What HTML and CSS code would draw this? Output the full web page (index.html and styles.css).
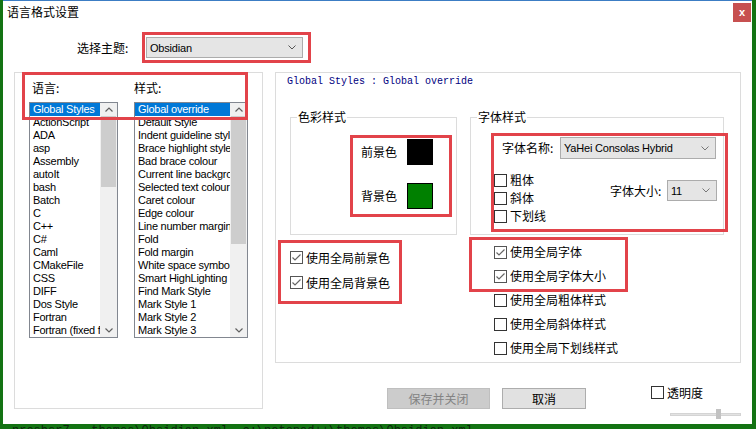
FILE: index.html
```html
<!DOCTYPE html>
<html lang="zh-CN">
<head>
<meta charset="utf-8">
<title>语言格式设置</title>
<link rel="stylesheet" href="styles.css">
</head>
<body>
<div class="dialog">
  <div class="titlebar">
    <span class="title">语言格式设置</span>
    <span class="close">x</span>
  </div>

  <div class="theme-row">
    <span class="theme-label">选择主题:</span>
    <div class="combo theme-combo">
      <span>Obsidian</span>
      <svg class="chev" width="8" height="5" viewBox="0 0 8 5"><polyline points="0.5,0.5 4,4 7.5,0.5" fill="none" stroke="#555" stroke-width="1"/></svg>
    </div>
  </div>

  <div class="main">
    <div class="group left-group">
      <div class="lists">
        <div class="col lang-col">
          <div class="col-label">语言:</div>
          <div class="listbox lang-list">
            <ul class="items">
              <li class="sel">Global Styles</li>
              <li>ActionScript</li>
              <li>ADA</li>
              <li>asp</li>
              <li>Assembly</li>
              <li>autoIt</li>
              <li>bash</li>
              <li>Batch</li>
              <li>C</li>
              <li>C++</li>
              <li>C#</li>
              <li>Caml</li>
              <li>CMakeFile</li>
              <li>CSS</li>
              <li>DIFF</li>
              <li>Dos Style</li>
              <li>Fortran</li>
              <li>Fortran (fixed form)</li>
            </ul>
            <div class="vscroll">
              <span class="arrow"><svg width="8" height="5" viewBox="0 0 8 5"><polyline points="0.5,4.5 4,1 7.5,4.5" fill="none" stroke="#606060" stroke-width="1.2"/></svg></span>
              <span class="track"><span class="thumb" style="height:71px"></span></span>
              <span class="arrow"><svg width="8" height="5" viewBox="0 0 8 5"><polyline points="0.5,0.5 4,4 7.5,0.5" fill="none" stroke="#606060" stroke-width="1.2"/></svg></span>
            </div>
          </div>
        </div>
        <div class="col style-col">
          <div class="col-label">样式:</div>
          <div class="listbox style-list">
            <ul class="items">
              <li class="sel">Global override</li>
              <li>Default Style</li>
              <li>Indent guideline style</li>
              <li>Brace highlight style</li>
              <li>Bad brace colour</li>
              <li>Current line background colour</li>
              <li>Selected text colour</li>
              <li>Caret colour</li>
              <li>Edge colour</li>
              <li>Line number margin</li>
              <li>Fold</li>
              <li>Fold margin</li>
              <li>White space symbol</li>
              <li>Smart HighLighting</li>
              <li>Find Mark Style</li>
              <li>Mark Style 1</li>
              <li>Mark Style 2</li>
              <li>Mark Style 3</li>
            </ul>
            <div class="vscroll">
              <span class="arrow"><svg width="8" height="5" viewBox="0 0 8 5"><polyline points="0.5,4.5 4,1 7.5,4.5" fill="none" stroke="#606060" stroke-width="1.2"/></svg></span>
              <span class="track"><span class="thumb" style="height:128px"></span></span>
              <span class="arrow"><svg width="8" height="5" viewBox="0 0 8 5"><polyline points="0.5,0.5 4,4 7.5,0.5" fill="none" stroke="#606060" stroke-width="1.2"/></svg></span>
            </div>
          </div>
        </div>
      </div>
    </div>

    <div class="right-col">
      <div class="group right-group">
        <div class="header">Global Styles : Global override</div>
        <div class="boxes">
          <fieldset class="color-box">
            <legend>色彩样式</legend>
            <div class="color-row first">
              <span class="color-label">前景色</span>
              <span class="swatch black"></span>
            </div>
            <div class="color-row">
              <span class="color-label">背景色</span>
              <span class="swatch green"></span>
            </div>
          </fieldset>
          <fieldset class="font-box">
            <legend>字体样式</legend>
            <div class="font-name-row">
              <span class="fn-label">字体名称:</span>
              <div class="combo font-combo">
                <span>YaHei Consolas Hybrid</span>
                <svg class="chev" width="8" height="5" viewBox="0 0 8 5"><polyline points="0.5,0.5 4,4 7.5,0.5" fill="none" stroke="#777" stroke-width="1"/></svg>
              </div>
            </div>
            <div class="font-opts">
              <div class="style-checks">
                <label class="check"><span class="box"></span>粗体</label>
                <label class="check"><span class="box"></span>斜体</label>
                <label class="check"><span class="box"></span>下划线</label>
              </div>
              <div class="size-group">
                <span class="size-label">字体大小:</span>
                <div class="combo size-combo">
                  <span>11</span>
                  <svg class="chev" width="8" height="5" viewBox="0 0 8 5"><polyline points="0.5,0.5 4,4 7.5,0.5" fill="none" stroke="#777" stroke-width="1"/></svg>
                </div>
              </div>
            </div>
          </fieldset>
        </div>
        <div class="checks">
          <div class="checks-left">
            <label class="check"><span class="box on"><svg width="9" height="7" viewBox="0 0 9 7"><polyline points="0.5,3.5 3,6 8.5,0.5" fill="none" stroke="#666" stroke-width="1.2"/></svg></span>使用全局前景色</label>
            <label class="check"><span class="box on"><svg width="9" height="7" viewBox="0 0 9 7"><polyline points="0.5,3.5 3,6 8.5,0.5" fill="none" stroke="#666" stroke-width="1.2"/></svg></span>使用全局背景色</label>
          </div>
          <div class="checks-right">
            <label class="check"><span class="box on"><svg width="9" height="7" viewBox="0 0 9 7"><polyline points="0.5,3.5 3,6 8.5,0.5" fill="none" stroke="#666" stroke-width="1.2"/></svg></span>使用全局字体</label>
            <label class="check"><span class="box on"><svg width="9" height="7" viewBox="0 0 9 7"><polyline points="0.5,3.5 3,6 8.5,0.5" fill="none" stroke="#666" stroke-width="1.2"/></svg></span>使用全局字体大小</label>
            <label class="check"><span class="box"></span>使用全局粗体样式</label>
            <label class="check"><span class="box"></span>使用全局斜体样式</label>
            <label class="check"><span class="box"></span>使用全局下划线样式</label>
          </div>
        </div>
      </div>

      <div class="bottom">
        <span class="btn btn-save">保存并关闭</span>
        <span class="btn btn-cancel">取消</span>
        <div class="transp">
          <label class="check transp-check"><span class="box"></span>透明度</label>
          <div class="slider"><span class="slider-track"></span><span class="slider-thumb"></span></div>
        </div>
      </div>
    </div>
  </div>

  <div class="mark mark-theme"></div>
  <div class="mark mark-lists"></div>
  <div class="mark mark-color"></div>
  <div class="mark mark-font"></div>
  <div class="mark mark-checks-left"></div>
  <div class="mark mark-checks-right"></div>
</div>
<div class="backdrop-text">nresbsr7 - themes\Obsidian.xml  c:\notepad++\themes\Obsidian.xml</div>
</body>
</html>
```

FILE: styles.css
```css
* {
  box-sizing: border-box;
}

html, body {
  margin: 0;
  padding: 0;
}

body {
  width: 756px;
  height: 429px;
  overflow: hidden;
  background: #137313;
  font-family: "Liberation Sans", "Noto Sans CJK SC", sans-serif;
  font-size: 12px;
  color: #000;
}

.dialog {
  position: relative;
  margin-left: 3px;
  width: 749px;
  height: 424px;
  background: #fff;
  border-top: 1px solid #3c7dc4;
}

/* title bar */
.titlebar {
  display: flex;
  justify-content: space-between;
  align-items: flex-start;
  height: 31px;
}

.title {
  font-family: "Noto Sans CJK SC", sans-serif;
  font-size: 12px;
  line-height: 16px;
  padding: 3px 0 0 4px;
}

.close {
  width: 18px;
  height: 19px;
  margin: 2px 1px 0 0;
  background: #c75050;
  color: #fff;
  font: bold 11px/18px "Liberation Sans", sans-serif;
  text-align: center;
}

/* theme row */
.theme-row {
  display: flex;
  align-items: center;
  height: 21px;
  margin-top: 5px;
  padding-left: 74px;
}

.theme-label {
  width: 69px;
  font-family: "Noto Sans CJK SC", sans-serif;
  line-height: 16px;
}

.combo {
  display: flex;
  align-items: center;
  justify-content: space-between;
  background: #e5e5e5;
  border: 1px solid #acacac;
  padding: 0 6px 0 3px;
  font-size: 11px;
  letter-spacing: -0.2px;
  white-space: nowrap;
}

.theme-combo {
  width: 157px;
  height: 21px;
}

.chev {
  flex: none;
}

/* main area */
.main {
  display: flex;
  gap: 12px;
  margin-top: 14px;
  padding-left: 11px;
}

.group {
  border: 1px solid #dcdcdc;
}

.left-group {
  width: 249px;
  height: 337px;
  padding: 7px 0 0 14px;
}

.lists {
  display: flex;
  gap: 16px;
}

.col {
  display: flex;
  flex-direction: column;
}

.col-label {
  height: 16px;
  line-height: 16px;
  margin-bottom: 6px;
  font-family: "Noto Sans CJK SC", sans-serif;
}

.lang-col .col-label {
  margin-left: 3px;
}

.listbox {
  display: flex;
  height: 236px;
  border: 1px solid #828790;
  background: #fff;
}

.lang-list {
  width: 89px;
}

.style-list {
  width: 114px;
}

.items {
  flex: 1;
  min-width: 0;
  list-style: none;
  margin: 0;
  padding: 0;
  overflow: hidden;
}

.items li {
  height: 13px;
  line-height: 13px;
  padding-left: 3px;
  white-space: nowrap;
  overflow: hidden;
  font-size: 11px;
  letter-spacing: -0.25px;
}

.items li.sel {
  background: #0078d7;
  color: #fff;
}

.vscroll {
  width: 17px;
  flex: none;
  display: flex;
  flex-direction: column;
  background: #f0f0f0;
}

.arrow {
  height: 13px;
  display: flex;
  align-items: center;
  justify-content: center;
}

.track {
  flex: 1;
}

.thumb {
  display: block;
  margin: 0 1px;
  background: #cdcdcd;
}

/* right column */
.right-col {
  display: flex;
  flex-direction: column;
  width: 466px;
}

.right-group {
  height: 291px;
}

.header {
  height: 14px;
  margin: 2px 0 0 11px;
  font: 10px/14px "Liberation Mono", monospace;
  color: #000080;
  white-space: pre;
}

.boxes {
  display: flex;
  gap: 13px;
  margin: 21px 0 0 14px;
}

fieldset {
  margin: 0;
  padding: 0;
  min-width: 0;
  border: 1px solid #dcdcdc;
}

legend {
  margin-left: 6px;
  padding: 0 1px;
  height: 14px;
  line-height: 14px;
  font-family: "Noto Sans CJK SC", sans-serif;
}

.color-box {
  width: 167px;
  height: 125px;
}

.font-box {
  width: 254px;
  height: 125px;
}

.color-row {
  display: flex;
  align-items: center;
  height: 26px;
  padding-left: 70px;
  margin-top: 18px;
}

.color-row.first {
  margin-top: 15px;
}

.color-label {
  width: 46px;
  line-height: 16px;
  font-family: "Noto Sans CJK SC", sans-serif;
}

.swatch {
  width: 26px;
  height: 26px;
  border: 1px solid #000;
}

.swatch.black {
  background: #000;
}

.swatch.green {
  background: #008000;
}

.font-name-row {
  display: flex;
  align-items: center;
  height: 22px;
  margin-top: 13px;
  padding-left: 31px;
}

.fn-label,
.size-label {
  font-family: "Noto Sans CJK SC", sans-serif;
  line-height: 16px;
}

.fn-label {
  width: 58px;
}

.font-combo {
  width: 156px;
  height: 22px;
}

.font-opts {
  display: flex;
  margin-top: 12px;
  padding-left: 23px;
}

.style-checks {
  display: flex;
  flex-direction: column;
}

.style-checks .check {
  height: 18px;
}

.size-group {
  display: flex;
  align-items: center;
  align-self: flex-start;
  height: 21px;
  margin: 9px 6px 0 auto;
}

.size-label {
  width: 57px;
}

.size-combo {
  width: 50px;
  height: 21px;
}

/* checkboxes */
.check {
  display: flex;
  align-items: center;
  font-family: "Noto Sans CJK SC", sans-serif;
  line-height: 16px;
  white-space: nowrap;
}

.box {
  flex: none;
  width: 13px;
  height: 13px;
  margin-right: 3px;
  border: 1px solid #333;
  background: #fff;
  display: flex;
  align-items: center;
  justify-content: center;
}

.box.on {
  border-color: #555;
}

.checks {
  display: flex;
}

.checks-left {
  width: 204px;
  margin: 10px 0 0 14px;
}

.checks-left .check {
  height: 25px;
}

.checks-right {
  margin-top: 5px;
}

.checks-right .check {
  height: 24px;
}

/* bottom */
.bottom {
  display: flex;
  align-items: flex-start;
  margin-top: 25px;
  padding-left: 112px;
}

.btn {
  height: 21px;
  display: flex;
  align-items: center;
  justify-content: center;
  border: 1px solid;
  font-family: "Noto Sans CJK SC", sans-serif;
  line-height: 16px;
}

.btn-save {
  width: 103px;
  background: #cccccc;
  border-color: #bfbfbf;
  color: #838383;
}

.btn-cancel {
  width: 84px;
  margin-left: 12px;
  background: #e1e1e1;
  border-color: #adadad;
}

.transp {
  display: flex;
  flex-direction: column;
  margin: -2px 0 0 65px;
}

.transp-check {
  height: 13px;
}

.slider {
  position: relative;
  width: 71px;
  height: 12px;
  margin: 10px 0 0 19px;
}

.slider-track {
  display: block;
  height: 3px;
  margin-top: 4px;
  background: #e2e2e2;
  border: 1px solid #d4d4d4;
}

.slider-thumb {
  position: absolute;
  left: 46px;
  top: 0;
  width: 5px;
  height: 10px;
  background: #c2c2c2;
}

/* red annotation frames */
.mark {
  position: absolute;
  border: 3px solid #e2434a;
}

.mark-theme {
  left: 139px;
  top: 31px;
  width: 169px;
  height: 31px;
}

.mark-lists {
  left: 19px;
  top: 71px;
  width: 226px;
  height: 48px;
}

.mark-color {
  left: 347px;
  top: 134px;
  width: 102px;
  height: 82px;
}

.mark-font {
  left: 488px;
  top: 132px;
  width: 237px;
  height: 99px;
}

.mark-checks-left {
  left: 275px;
  top: 239px;
  width: 124px;
  height: 64px;
}

.mark-checks-right {
  left: 466px;
  top: 236px;
  width: 159px;
  height: 55px;
}

.backdrop-text {
  margin: 0 0 0 12px;
  font: 12px/14px "Liberation Mono", monospace;
  color: #0c250c;
  white-space: pre;
}
```
